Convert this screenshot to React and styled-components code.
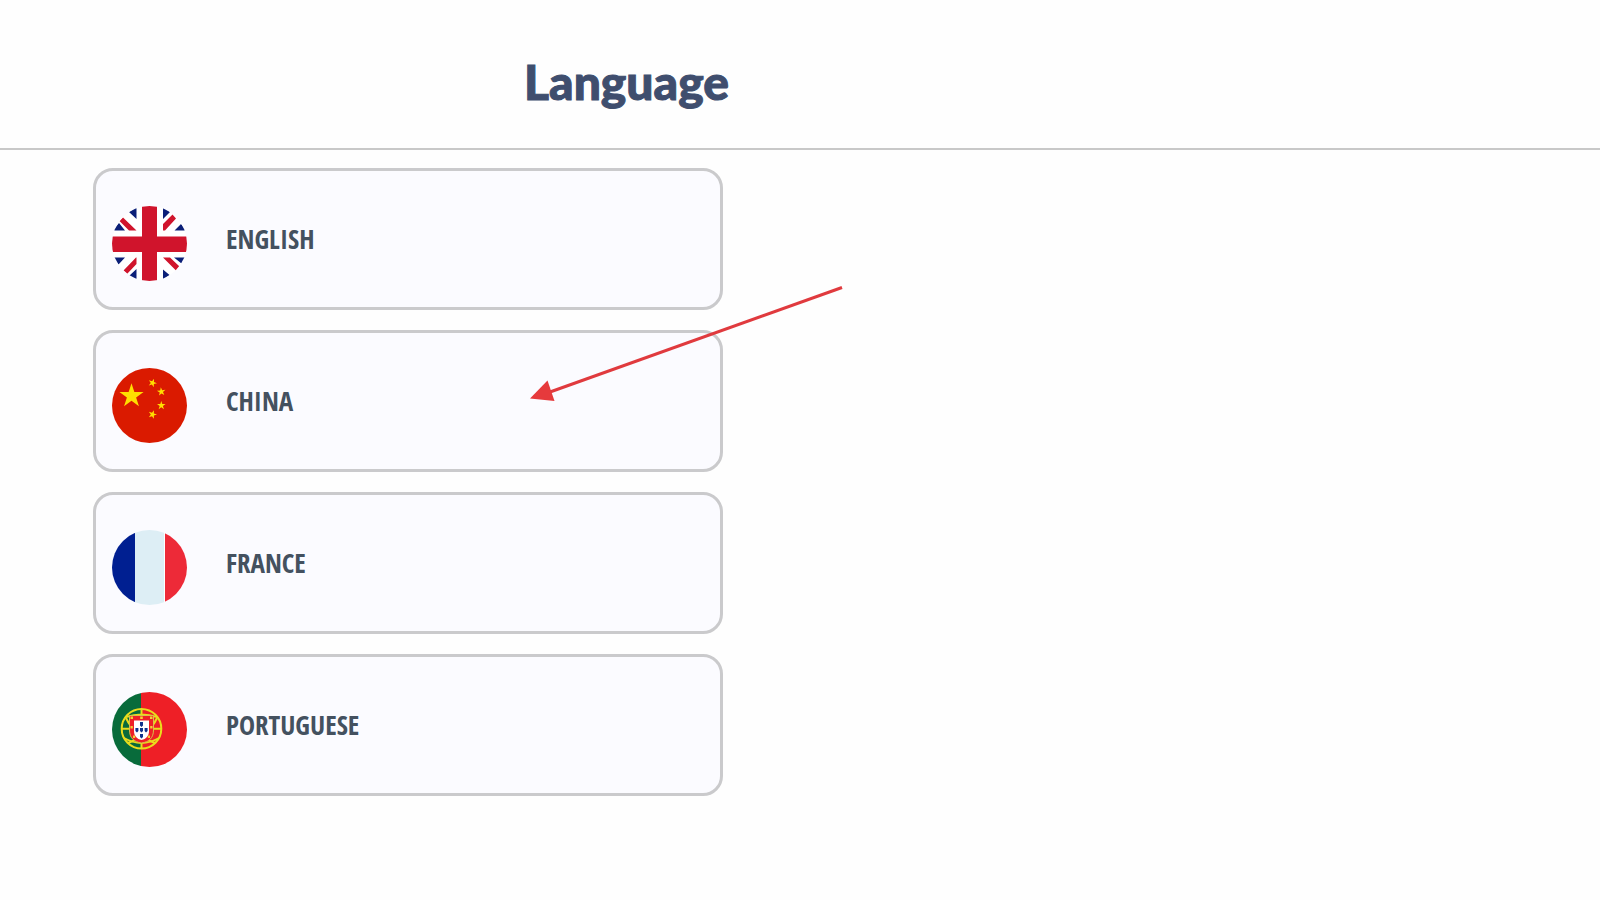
import React from "react";
import styled, { createGlobalStyle } from "styled-components";

const GlobalStyle = createGlobalStyle`
  *, *::before, *::after { box-sizing: border-box; }
  body { margin: 0; background: #fefefe; }
`;

const Page = styled.div`
  position: relative;
  min-height: 100vh;
`;

const Header = styled.header`
  display: flex;
  align-items: center;
  height: 150px;
  padding: 16px 24px 0 524px;
  border-bottom: 2px solid #c8c8c8;
`;

const Title = styled.h1`
  margin: 0;
  color: #3f4e6e;
  font: 900 48px/60px Lato, sans-serif;
  -webkit-text-stroke: 1px #3f4e6e;
`;

const LanguageList = styled.ul`
  display: flex;
  flex-direction: column;
  gap: 20px;
  max-width: 723px;
  margin: 0;
  padding: 18px 0 24px 93px;
  list-style: none;
`;

const LanguageButton = styled.button`
  display: flex;
  align-items: center;
  gap: 39px;
  width: 100%;
  height: 142px;
  padding: 0 16px;
  border: 3px solid #cacacc;
  border-radius: 20px;
  background: #fbfbff;
  cursor: pointer;
`;

const LanguageName = styled.span`
  color: #44515f;
  font: 700 27px/36px "Open Sans Condensed", "Open Sans", sans-serif;
  text-transform: uppercase;
`;

const Flag = styled.svg`
  flex: none;
  width: 75px;
  height: 75px;
  margin-top: 8px;
  border-radius: 50%;
`;

const Arrow = styled.svg`
  position: absolute;
  top: 280px;
  left: 520px;
  width: 330px;
  height: 130px;
  pointer-events: none;
`;

function starPoints(cx, cy, r, turn = 0) {
  return Array.from({ length: 10 }, (_, i) => {
    const radius = i % 2 ? r * 0.382 : r;
    const a = ((i * 36 - 90 + turn) * Math.PI) / 180;
    return `${(cx + radius * Math.cos(a)).toFixed(2)},${(cy + radius * Math.sin(a)).toFixed(2)}`;
  }).join(" ");
}

function UnitedKingdom() {
  return (
    <Flag viewBox="0 0 75 75" aria-hidden="true">
      <rect width="75" height="75" fill="#fff" />
      <g fill="#0b1f78">
        <path d="M17 6 24.5 1V13ZM1 24.5 7 17 13 24.5ZM51 1 58 6 51 13ZM62.5 24.5 69 18 74 24.5Z" />
        <path d="M1 51.5H13L6.5 58.5ZM17 70 24.5 63V74ZM62 51.5H74L69.5 57.5ZM51 63.5 57.5 69 51 74Z" />
      </g>
      <g fill="#d0142c">
        <path d="M7.5 15 11 11.5 24.5 24.5H17ZM60.5 8.5 64 12.5 53 24.5H51V18Z" />
        <path d="M11.5 64.5 15 68 24.5 58V51.5H24ZM51 51.5H58L67.5 60.5 64 64.5Z" />
        <path d="M30 0H45V30.5H75V46H45V75H30V46H0V30.5H30Z" />
      </g>
    </Flag>
  );
}

function China() {
  return (
    <Flag viewBox="0 0 75 75" aria-hidden="true">
      <rect width="75" height="75" fill="#da1a00" />
      <g fill="#ffde00">
        <polygon points={starPoints(19.5, 28, 12.7)} />
        <polygon points={starPoints(40.5, 15, 4.5, 20)} />
        <polygon points={starPoints(49.3, 23.7, 4.5, -6)} />
        <polygon points={starPoints(49.3, 37.5, 4.5)} />
        <polygon points={starPoints(40.5, 46.5, 4.5, 18)} />
      </g>
    </Flag>
  );
}

function France() {
  return (
    <Flag viewBox="0 0 75 75" aria-hidden="true">
      <rect width="23" height="75" fill="#001f91" />
      <rect x="23" width="29" height="75" fill="#ddeef5" />
      <rect x="52" width="1" height="75" fill="#fff" />
      <rect x="53" width="22" height="75" fill="#ed2a38" />
    </Flag>
  );
}

function Portugal() {
  return (
    <Flag viewBox="0 0 75 75" aria-hidden="true">
      <rect width="29" height="75" fill="#086b3b" />
      <rect x="29" width="46" height="75" fill="#ee1f26" />
      <g fill="none" stroke="#e9dc1c" strokeWidth="2">
        <circle cx="29.5" cy="36.7" r="19.8" />
        <path d="M29.5 17V56.5M9.7 36.7H49.3M14 25Q29.5 20 45 25M12 46Q29.5 56 47 46" />
        <path d="M14 26Q22 43 43 51M45 26Q37 43 16 51" />
      </g>
      <path d="M17.5 23.5H41.5V38C41.5 46 37 50 29.5 51C22 50 17.5 46 17.5 38Z" fill="#ee1f26" stroke="#d9c04a" strokeWidth="1" />
      <path d="M22 28.5H37V39C37 44 34 47 29.5 48C25 47 22 44 22 39Z" fill="#fff" />
      <g fill="#10328c">
        <path d="M28 30H31V33.5L29.5 35 28 33.5ZM28 36H31V39L29.5 40.5 28 39ZM28 42H31V45L29.5 46.5 28 45Z" />
        <path d="M23.4 36H26.4V39L25 40.5 23.4 39ZM32.6 36H35.6V39L34 40.5 32.6 39Z" />
      </g>
      <path
        fill="#f4cf35"
        d="M18.5 24.5H21V27H18.5ZM28.2 24.5H30.8V27H28.2ZM38 24.5H40.5V27H38ZM18.5 34H20.8V36.5H18.5ZM38.2 34H40.5V36.5H38.2ZM21 43.5H23.2V46H21ZM35.8 43.5H38V46H35.8Z"
      />
    </Flag>
  );
}

const languages = [
  { name: "English", Icon: UnitedKingdom },
  { name: "China", Icon: China },
  { name: "France", Icon: France },
  { name: "Portuguese", Icon: Portugal },
];

export default function App() {
  return (
    <Page>
      <GlobalStyle />
      <Header>
        <Title>Language</Title>
      </Header>
      <main>
        <LanguageList>
          {languages.map(({ name, Icon }) => (
            <li key={name}>
              <LanguageButton type="button">
                <Icon />
                <LanguageName>{name}</LanguageName>
              </LanguageButton>
            </li>
          ))}
        </LanguageList>
      </main>
      <Arrow viewBox="0 0 330 130" aria-hidden="true">
        <path d="M322 7.5 30 112" stroke="#e03a3e" strokeWidth="3" fill="none" />
        <path d="M10 118.5 27.5 100.5 34.5 121Z" fill="#e63a3c" />
      </Arrow>
    </Page>
  );
}
